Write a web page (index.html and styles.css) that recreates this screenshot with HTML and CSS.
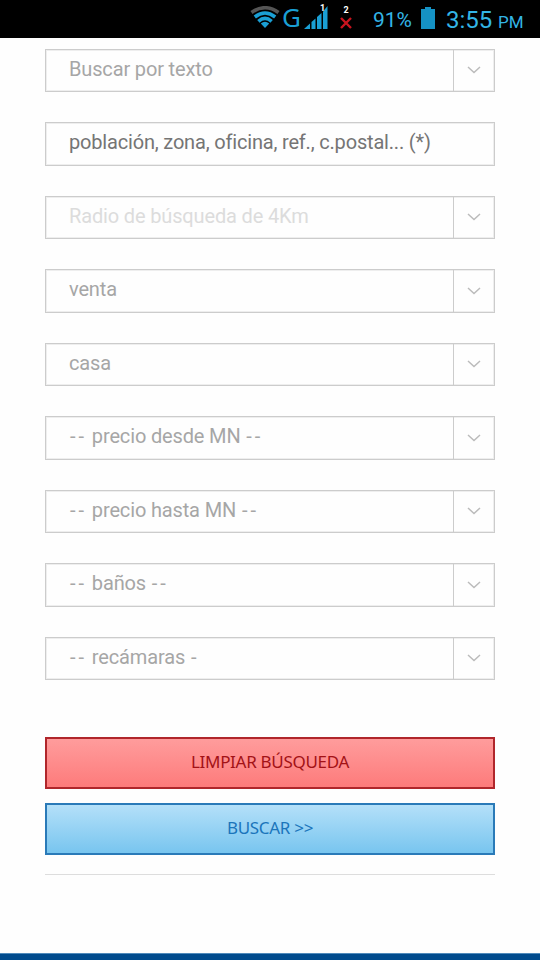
FILE: index.html
```html
<!DOCTYPE html>
<html lang="es">
<head>
    <meta charset="UTF-8">
    <meta name="viewport" content="width=device-width, initial-scale=1.0">
    <title>Buscar</title>
    <link rel="stylesheet" href="styles.css">
</head>
<body>
    <div class="status-bar">
        <svg class="wifi" width="30" height="22" viewBox="0 0 30 22">
            <g fill="none" stroke-width="3.6">
                <path d="M1.5 6.5 Q15 -3 28.5 6.5" stroke="#555"/>
                <path d="M4.8 11 Q15 3 25.2 11" stroke="#1a9fd4"/>
                <path d="M8.4 15.3 Q15 9.4 21.6 15.3" stroke="#1a9fd4"/>
            </g>
            <path d="M10.8 17.6 Q15 13.8 19.2 17.6 L15 22 Z" fill="#1a9fd4"/>
        </svg>
        <span class="network">G</span>
        <div class="signal">
            <svg width="25" height="24" viewBox="0 0 25 24" fill="#1a9fd4">
                <path d="M0 24 L6 18.5 V24 Z"/>
                <path d="M7.5 17 L11.5 13.5 V24 H7.5 Z"/>
                <path d="M13 12 L17.5 8 V24 H13 Z"/>
                <path d="M19 6.5 L23.5 1 V24 H19 Z"/>
            </svg>
            <span class="sim">1</span>
        </div>
        <div class="no-sim">
            <span>2</span>
            <svg width="12" height="12" viewBox="0 0 12 12"><path d="M1 1 L11 11 M11 1 L1 11" stroke="#c8141e" stroke-width="2.4"/></svg>
        </div>
        <span class="percent">91%</span>
        <svg class="battery" width="14" height="22" viewBox="0 0 14 22"><path d="M4 0 H10 V2 H14 V22 H0 V2 H4 Z" fill="#1592c4"/></svg>
        <span class="time">3:55</span>
        <span class="ampm">PM</span>
    </div>

    <form class="search-form">
        <div class="field">
            <div class="value">Buscar por texto</div>
            <span class="arrow"><svg width="14" height="8" viewBox="0 0 14 8"><path d="M1 1 L7 6.5 L13 1"/></svg></span>
        </div>
        <div class="field">
            <input type="text" placeholder="población, zona, oficina, ref., c.postal... (*)">
        </div>
        <div class="field disabled">
            <div class="value">Radio de búsqueda de 4Km</div>
            <span class="arrow"><svg width="14" height="8" viewBox="0 0 14 8"><path d="M1 1 L7 6.5 L13 1"/></svg></span>
        </div>
        <div class="field">
            <div class="value">venta</div>
            <span class="arrow"><svg width="14" height="8" viewBox="0 0 14 8"><path d="M1 1 L7 6.5 L13 1"/></svg></span>
        </div>
        <div class="field">
            <div class="value">casa</div>
            <span class="arrow"><svg width="14" height="8" viewBox="0 0 14 8"><path d="M1 1 L7 6.5 L13 1"/></svg></span>
        </div>
        <div class="field">
            <div class="value"><span class="dash">--</span> precio desde MN <span class="dash">--</span></div>
            <span class="arrow"><svg width="14" height="8" viewBox="0 0 14 8"><path d="M1 1 L7 6.5 L13 1"/></svg></span>
        </div>
        <div class="field">
            <div class="value"><span class="dash">--</span> precio hasta MN <span class="dash">--</span></div>
            <span class="arrow"><svg width="14" height="8" viewBox="0 0 14 8"><path d="M1 1 L7 6.5 L13 1"/></svg></span>
        </div>
        <div class="field">
            <div class="value"><span class="dash">--</span> baños <span class="dash">--</span></div>
            <span class="arrow"><svg width="14" height="8" viewBox="0 0 14 8"><path d="M1 1 L7 6.5 L13 1"/></svg></span>
        </div>
        <div class="field">
            <div class="value"><span class="dash">--</span> recámaras <span class="dash">-</span></div>
            <span class="arrow"><svg width="14" height="8" viewBox="0 0 14 8"><path d="M1 1 L7 6.5 L13 1"/></svg></span>
        </div>

        <div class="buttons">
            <button type="reset" class="btn clear">LIMPIAR BÚSQUEDA</button>
            <button type="button" class="btn search">BUSCAR &gt;&gt;</button>
        </div>
    </form>

    <footer></footer>
</body>
</html>
```
FILE: styles.css
```css
* {
    box-sizing: border-box;
}
body {
    margin: 0;
    height: 960px;
    overflow: hidden;
    background-color: #fefefe;
    font-family: Roboto, sans-serif;
    display: flex;
    flex-direction: column;
}
.status-bar {
    height: 38px;
    padding-left: 250px;
    background-color: #000;
    color: #33b5e5;
    display: flex;
    align-items: flex-start;
    line-height: 1;
}
.wifi {
    margin-top: 6px;
}
.network {
    width: 18px;
    margin: 4px 0 0 2px;
    font-family: "Noto Sans", sans-serif;
    font-size: 26px;
    color: #1a9fd4;
}
.signal {
    position: relative;
    margin: 5px 0 0 4px;
}
.sim {
    position: absolute;
    left: 16px;
    top: -1px;
    font-size: 9px;
    font-weight: bold;
    color: #fff;
}
.no-sim {
    width: 12px;
    margin: 6px 0 0 11px;
    display: flex;
    flex-direction: column;
    align-items: center;
    font-size: 9px;
    font-weight: bold;
    color: #fff;
}
.no-sim svg {
    margin-top: 2px;
}
.percent {
    width: 41px;
    margin: 10px 0 0 21px;
    font-size: 21px;
}
.battery {
    margin: 7px 0 0 7px;
}
.time {
    width: 48px;
    margin: 8px 0 0 11px;
    font-size: 24px;
}
.ampm {
    margin: 14px 0 0 4px;
    font-size: 17px;
}
.search-form {
    flex: 1;
    padding: 10.6px 45px 0;
}
.field {
    display: flex;
    height: 43.5px;
    margin-bottom: 30px;
    border: 1px solid #ccc;
    box-shadow: inset 0 0 0 1px #eee;
}
.value,
.field input {
    flex: 1;
    min-width: 0;
    border: none;
    outline: none;
    background: transparent;
    padding: 0 0 0 23px;
    font-family: Roboto, sans-serif;
    font-size: 20px;
    line-height: 38px;
    letter-spacing: -0.15px;
    color: #a6a6a6;
}
.field input {
    height: 38px;
    letter-spacing: -0.18px;
}
.field input::placeholder {
    color: #757575;
}
.disabled .value {
    color: #dcdcdc;
}
.dash {
    letter-spacing: 3px;
    padding-left: 1px;
}
.arrow {
    width: 41px;
    border-left: 1px solid #ccc;
    display: flex;
    align-items: center;
    justify-content: center;
}
.arrow path {
    fill: none;
    stroke: #bbb;
    stroke-width: 1.5;
}
.buttons {
    padding: 27px 0 19.5px;
    border-bottom: 1px solid #ddd;
}
.btn {
    display: block;
    width: 100%;
    height: 51.5px;
    margin-bottom: 14.5px;
    padding: 0 0 2px;
    font-family: "Noto Sans", sans-serif;
    font-size: 17px;
    letter-spacing: -0.3px;
}
.btn:last-child {
    margin-bottom: 0;
}
.clear {
    border: 2px solid #b0262b;
    background: linear-gradient(#ff9c9c, #fd7b7b);
    color: #a31216;
}
.search {
    border: 2px solid #2a7ab8;
    background: linear-gradient(#b4e0f9, #78c5ef);
    color: #1b75bb;
}
footer {
    height: 7px;
    border-top: 1px solid #4f8abb;
    background-color: #004b8d;
}
```
